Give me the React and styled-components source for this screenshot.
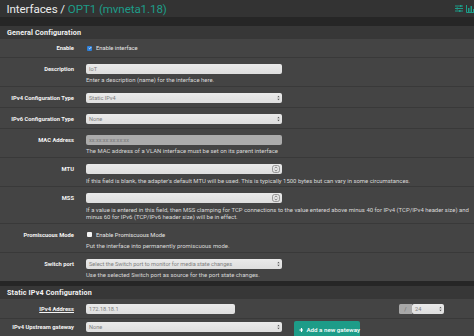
import React from "react";
import styled, { createGlobalStyle } from "styled-components";

const GlobalStyle = createGlobalStyle`
  html, body { margin: 0; padding: 0; background: #444; overflow: hidden; }
  body { font-family: Roboto, "Liberation Sans", Arial, sans-serif; }
  * { box-sizing: border-box; }
`;

const TEAL = "#1d9c88";

const Page = styled.div`
  width: 482px;
  height: 336px;
  overflow: hidden;
  display: flex;
  flex-direction: column;
  background: #444;
`;

const TopBar = styled.div`
  height: 17px;
  flex: none;
  background: #333;
  display: flex;
  align-items: center;
  justify-content: space-between;
  padding: 0 0 0 6.5px;
`;

const Title = styled.h1`
  margin: 0;
  font-size: 11.6px;
  font-weight: 400;
  color: #ececec;
  letter-spacing: -0.1px;
  white-space: nowrap;
`;

const Crumb = styled.span`
  color: ${TEAL};
`;

const TopIcons = styled.div`
  display: flex;
  align-items: center;
  gap: 3px;
  padding-right: 7px;
  color: ${TEAL};
`;

const Strip = styled.div`
  flex: none;
  height: ${(p) => p.$h}px;
  background: #262626;
`;

const PanelHeading = styled.h2`
  flex: none;
  margin: 0;
  height: ${(p) => p.$h}px;
  background: #373737;
  color: #f2f2f2;
  font-size: 7.2px;
  font-weight: 700;
  letter-spacing: 0.15px;
  display: flex;
  align-items: center;
  padding-left: 7px;
`;

const Row = styled.div`
  flex: none;
  display: grid;
  grid-template-columns: 74px 1fr;
  column-gap: 12px;
  padding: ${(p) => p.$pad || "6px 0 2.5px"};
  border-top: ${(p) => (p.$first ? "none" : "1px solid #393939")};
`;

const Label = styled.label`
  text-align: right;
  font-size: 5.8px;
  font-weight: 700;
  color: #f4f4f4;
  line-height: 10px;
  white-space: nowrap;
  margin-top: ${(p) => p.$mt || 0}px;
  text-decoration: ${(p) => (p.$req ? "underline" : "none")};
`;

const Field = styled.div`
  display: flex;
  flex-direction: column;
  min-width: 0;
`;

const Inline = styled.div`
  display: flex;
  align-items: ${(p) => p.$align || "center"};
  margin-left: ${(p) => p.$ml || 0}px;
`;

const Box = styled.div`
  width: ${(p) => p.$w || 196}px;
  height: 10px;
  flex: none;
  border-radius: 2px;
  background: ${(p) => (p.$disabled ? "#ababab" : "linear-gradient(#eaeaea, #dedede)")};
  color: ${(p) => (p.$disabled ? "#7a7a7a" : "#808080")};
  font-size: 5.6px;
  display: flex;
  align-items: center;
  justify-content: space-between;
  padding: 0 2.5px 0 3px;
  white-space: nowrap;
  overflow: hidden;
  margin-top: ${(p) => p.$mt || 0}px;
`;

const AddonBox = styled.div`
  width: 13px;
  height: 10px;
  background: #a8a8a8;
  color: #6a6a6a;
  font-size: 5.6px;
  display: flex;
  align-items: center;
  justify-content: center;
  border-radius: 1.5px 0 0 1.5px;
`;

const Help = styled.div`
  margin-top: 2.5px;
  font-size: 5.95px;
  line-height: 7.3px;
  color: #d9d9d9;
`;

const CheckLine = styled.div`
  display: flex;
  align-items: center;
  height: 10px;
  gap: 4px;
  padding-left: 1px;
  font-size: 5.8px;
  color: #e6e6e6;
`;

const Check = styled.span`
  width: 5px;
  height: 5px;
  border-radius: 1px;
  background: ${(p) => (p.$on ? "#2d7fd8" : "#f4f4f4")};
  display: inline-flex;
  align-items: center;
  justify-content: center;
`;

const Button = styled.button`
  width: 66px;
  height: 17px;
  margin-left: 12px;
  border: none;
  border-radius: 2px;
  background: ${TEAL};
  color: #fff;
  font-family: inherit;
  font-size: 6.2px;
  font-weight: 500;
  display: inline-flex;
  align-items: center;
  gap: 3px;
  padding: 0 0 0 4.5px;
  white-space: nowrap;
`;

const Arrows = () => (
  <svg width="3" height="6" viewBox="0 0 3 6">
    <path d="M0.3 2.3 L1.5 0.8 L2.7 2.3 Z M0.3 3.7 L1.5 5.2 L2.7 3.7 Z" fill="#555" />
  </svg>
);

const Spinner = () => (
  <svg width="8" height="8" viewBox="0 0 8 8">
    <rect x="0.5" y="0.5" width="7" height="7" rx="2" fill="none" stroke="#777" strokeWidth="0.7" />
    <path d="M2.6 3.3 L4 1.9 L5.4 3.3 M2.6 4.7 L4 6.1 L5.4 4.7" fill="none" stroke="#666" strokeWidth="0.7" />
  </svg>
);

const Tick = () => (
  <svg width="4" height="4" viewBox="0 0 4 4">
    <path d="M0.7 2 L1.6 2.9 L3.3 1" fill="none" stroke="#fff" strokeWidth="0.8" />
  </svg>
);

const Plus = () => (
  <svg width="6" height="6" viewBox="0 0 6 6">
    <path d="M3 0.5 V5.5 M0.5 3 H5.5" stroke="#fff" strokeWidth="1.4" />
  </svg>
);

const SlidersIcon = () => (
  <svg width="8" height="7" viewBox="0 0 8 7">
    <path d="M0 1 H8 M0 3.5 H8 M0 6 H8" stroke={TEAL} strokeWidth="1" />
    <rect x="5" y="0" width="1.5" height="2" fill={TEAL} />
    <rect x="1.5" y="2.5" width="1.5" height="2" fill={TEAL} />
    <rect x="4" y="5" width="1.5" height="2" fill={TEAL} />
  </svg>
);

const ChartIcon = () => (
  <svg width="9" height="8" viewBox="0 0 9 8">
    <path d="M0.5 0 V7.5 H9" fill="none" stroke={TEAL} strokeWidth="1" />
    <rect x="2" y="3" width="1.5" height="4" fill={TEAL} />
    <rect x="4.5" y="1" width="1.5" height="6" fill={TEAL} />
    <rect x="7" y="4" width="1.5" height="3" fill={TEAL} />
  </svg>
);

const Select = ({ w, children, mt }) => (
  <Box $w={w} $mt={mt}>
    <span>{children}</span>
    <Arrows />
  </Box>
);

export default function App() {
  return (
    <>
      <GlobalStyle />
      <Page>
        <TopBar>
          <Title>
            Interfaces / <Crumb>OPT1 (mvneta1.18)</Crumb>
          </Title>
          <TopIcons>
            <SlidersIcon />
            <ChartIcon />
          </TopIcons>
        </TopBar>
        <Strip $h={9} />
        <PanelHeading $h={13}>General Configuration</PanelHeading>

        <Row $first $pad="4px 0 3.5px">
          <Label>Enable</Label>
          <CheckLine>
            <Check $on>
              <Tick />
            </Check>
            Enable interface
          </CheckLine>
        </Row>

        <Row>
          <Label>Description</Label>
          <Field>
            <Box>
              <span>IoT</span>
            </Box>
            <Help>Enter a description (name) for the interface here.</Help>
          </Field>
        </Row>

        <Row $pad="6px 0 4px">
          <Label>IPv4 Configuration Type</Label>
          <Field>
            <Select>Static IPv4</Select>
          </Field>
        </Row>

        <Row $pad="6px 0 4px">
          <Label>IPv6 Configuration Type</Label>
          <Field>
            <Select>None</Select>
          </Field>
        </Row>

        <Row>
          <Label>MAC Address</Label>
          <Field>
            <Box $disabled>
              <span>xx:xx:xx:xx:xx:xx</span>
            </Box>
            <Help>The MAC address of a VLAN interface must be set on its parent interface</Help>
          </Field>
        </Row>

        <Row>
          <Label>MTU</Label>
          <Field>
            <Box>
              <span />
              <Spinner />
            </Box>
            <Help>
              If this field is blank, the adapter's default MTU will be used. This is typically 1500 bytes but can vary in some circumstances.
            </Help>
          </Field>
        </Row>

        <Row>
          <Label>MSS</Label>
          <Field>
            <Box>
              <span />
              <Spinner />
            </Box>
            <Help>
              If a value is entered in this field, then MSS clamping for TCP connections to the value entered above minus 40 for IPv4 (TCP/IPv4 header size) and minus 60 for IPv6 (TCP/IPv6 header size) will be in effect.
            </Help>
          </Field>
        </Row>

        <Row>
          <Label>Promiscuous Mode</Label>
          <Field>
            <CheckLine>
              <Check />
              Enable Promiscuous Mode
            </CheckLine>
            <Help>Put the interface into permanently promiscuous mode.</Help>
          </Field>
        </Row>

        <Row $pad="5.3px 0 3px">
          <Label>Switch port</Label>
          <Field>
            <Select>Select the Switch port to monitor for media state changes</Select>
            <Help>Use the selected Switch port as source for the port state changes.</Help>
          </Field>
        </Row>

        <Strip $h={5} />
        <PanelHeading $h={12.3}>Static IPv4 Configuration</PanelHeading>

        <Row $first $pad="5.7px 0 3.5px">
          <Label $req>IPv4 Address</Label>
          <Field>
            <Inline>
              <Box $w={149}>
                <span>172.18.18.1</span>
              </Box>
              <Inline $ml={164}>
                <AddonBox>/</AddonBox>
                <Select w={32}>24</Select>
              </Inline>
            </Inline>
          </Field>
        </Row>

        <Row $pad="2.3px 0 0">
          <Label $mt={1}>IPv4 Upstream gateway</Label>
          <Field>
            <Inline $align="flex-start">
              <Select mt={1}>None</Select>
              <Button>
                <Plus />
                Add a new gateway
              </Button>
            </Inline>
          </Field>
        </Row>
      </Page>
    </>
  );
}
